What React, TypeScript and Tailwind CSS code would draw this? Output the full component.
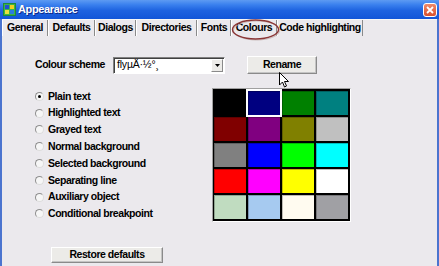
import React from 'react'

// ─── Data ─────────────────────────────────────────────────────────────────────

const TABS: { label: string; w: string }[] = [
  { label: 'General', w: 'w-[46px]' },
  { label: 'Defaults', w: 'w-[47px]' },
  { label: 'Dialogs', w: 'w-[41px]' },
  { label: 'Directories', w: 'w-[61px]' },
  { label: 'Fonts', w: 'w-[34px]' },
  { label: 'Colours', w: 'w-[46px]' },
  { label: 'Code highlighting', w: 'w-[86px]' },
]

const ITEMS = [
  'Plain text',
  'Highlighted text',
  'Grayed text',
  'Normal background',
  'Selected background',
  'Separating line',
  'Auxiliary object',
  'Conditional breakpoint',
]

const PALETTE = [
  '#000000', '#000080', '#008000', '#008080',
  '#800000', '#800080', '#808000', '#c0c0c0',
  '#808080', '#0000ff', '#00ff00', '#00ffff',
  '#ff0000', '#ff00ff', '#ffff00', '#ffffff',
  '#c0dcc0', '#a6caf0', '#fffbf0', '#a0a0a4',
]

const FONT = "font-['Liberation_Sans',Arial,sans-serif]"
const LABEL = 'text-[10.5px] font-bold tracking-[-0.45px] text-black'

// ─── Bits ─────────────────────────────────────────────────────────────────────

function AppIcon() {
  return (
    <svg width="13" height="13" viewBox="0 0 13 13">
      <rect x="0" y="0" width="13" height="13" fill="#1f8a3a" />
      <rect x="1" y="1" width="11" height="11" fill="#3cb44a" />
      <rect x="2" y="2" width="4" height="4" fill="#2050d0" />
      <rect x="7" y="2" width="4" height="4" fill="#f0d020" />
      <rect x="2" y="7" width="4" height="4" fill="#e8e040" />
      <rect x="7" y="7" width="4" height="4" fill="#2a7de0" />
    </svg>
  )
}

function Radio({ checked }: { checked?: boolean }) {
  return (
    <span className="w-[9px] h-[9px] rounded-full bg-[#f6f6f6] border border-t-[#8e8e8e] border-l-[#8e8e8e] border-r-[#dcdcdc] border-b-[#dcdcdc] flex items-center justify-center shrink-0">
      {checked && <span className="w-[3px] h-[3px] rounded-full bg-black" />}
    </span>
  )
}

function Button({ label, className }: { label: string; className: string }) {
  return (
    <div
      className={`${className} flex items-center justify-center bg-[#ecebe8] border border-t-white border-l-white border-r-[#8a8a8a] border-b-[#8a8a8a] shadow-[inset_-1px_-1px_0_#c4c4c4] ${LABEL}`}
    >
      {label}
    </div>
  )
}

// ─── Main ─────────────────────────────────────────────────────────────────────

export default function App() {
  return (
    <div className={`relative w-[439px] h-[266px] overflow-hidden bg-[#ebe9ed] ${FONT}`}>
      {/* Title bar */}
      <div className="h-[19px] flex items-center pl-[3px] pr-[2px] bg-[linear-gradient(to_bottom,#5d9af2_0%,#3a80ee_25%,#1e63e0_55%,#1256d8_100%)]">
        <AppIcon />
        <span className="ml-[2px] text-white text-[11px] font-bold tracking-[-0.35px] [text-shadow:1px_1px_0_#0a2a8a]">
          Appearance
        </span>
        <div className="ml-auto w-[14px] h-[14px] rounded-[3px] border border-white bg-[linear-gradient(to_bottom,#f08a6a,#d8502e)] flex items-center justify-center">
          <svg width="8" height="8" viewBox="0 0 8 8">
            <path d="M1 1 L7 7 M7 1 L1 7" stroke="white" strokeWidth="1.8" />
          </svg>
        </div>
      </div>

      {/* Window body */}
      <div className="h-[247px] border-l-2 border-r-2 border-[#4b74cf]">
        {/* Tabs */}
        <div className="h-[17px] flex border-t border-t-[#f7f7f7]">
          {TABS.map(t => (
            <div
              key={t.label}
              className={`${t.w} h-[16px] flex items-center justify-center border-l border-l-white border-r border-r-[#8a8a8a] ${LABEL}`}
            >
              {t.label}
            </div>
          ))}
        </div>

        {/* Scheme row */}
        <div className="mt-[20px] h-[18px] flex items-center pl-[33px]">
          <span className={`w-[78px] ${LABEL}`}>Colour scheme</span>
          <div className="w-[112px] h-[17px] flex items-center bg-white border border-t-[#808080] border-l-[#808080] border-r-white border-b-white shadow-[inset_1px_1px_0_#404040]">
            <span className="flex-1 pl-[3px] text-[10.5px] tracking-[-0.2px] text-black">flyµÄ·½°¸</span>
            <div className="w-[12px] h-[13px] mr-[1px] flex items-center justify-center bg-[#ecebe8] border border-t-white border-l-white border-r-[#8a8a8a] border-b-[#8a8a8a]">
              <svg width="5" height="3" viewBox="0 0 5 3">
                <path d="M0 0 H5 L2.5 3 Z" fill="black" />
              </svg>
            </div>
          </div>
          <Button label="Rename" className="ml-[22px] w-[70px] h-[18px]" />
        </div>

        {/* Items + palette */}
        <div className="mt-[14px] h-[136px] flex pl-[33px]">
          <div className="w-[177px] flex flex-col">
            {ITEMS.map((item, i) => (
              <div key={item} className="h-[16.8px] flex items-center gap-[4px]">
                <Radio checked={i === 0} />
                <span className={LABEL}>{item}</span>
              </div>
            ))}
          </div>
          <div className="w-[139px] h-[134px] border border-t-[#a0a0a0] border-l-[#a0a0a0] border-r-white border-b-white bg-black">
            <div className="grid grid-cols-[repeat(4,32px)] gap-[2px] px-[1px] pt-[2px]">
              {PALETTE.map((c, i) => (
                <div
                  key={c + i}
                  className={`h-[24px] shadow-[inset_1px_1px_0_rgba(0,0,0,0.25)] ${i === 1 ? 'outline-2 outline-white' : ''}`}
                  style={{ background: c }}
                />
              ))}
            </div>
          </div>
        </div>

        {/* Restore */}
        <div className="mt-[23px] pl-[49px]">
          <Button label="Restore defaults" className="w-[112px] h-[16px]" />
        </div>
      </div>

      {/* Annotation ellipse around the Colours tab */}
      <svg className="absolute left-[228px] top-[17px]" width="56" height="26" viewBox="0 0 56 26">
        <ellipse cx="28.5" cy="13.5" rx="23" ry="9.5" fill="none" stroke="#c9b9b9" strokeWidth="1" />
        <ellipse cx="27.5" cy="12.5" rx="23" ry="9.5" fill="none" stroke="#8a3535" strokeWidth="1.4" />
      </svg>

      {/* Mouse cursor */}
      <svg className="absolute left-[279px] top-[72px]" width="11" height="17" viewBox="0 0 11 17">
        <path
          d="M0.5 0.5 L0.5 13 L3.5 10 L5.5 15 L7.5 14 L5.5 9.5 L9.5 9.5 Z"
          fill="white"
          stroke="black"
          strokeWidth="1"
          strokeLinejoin="miter"
        />
      </svg>
    </div>
  )
}
